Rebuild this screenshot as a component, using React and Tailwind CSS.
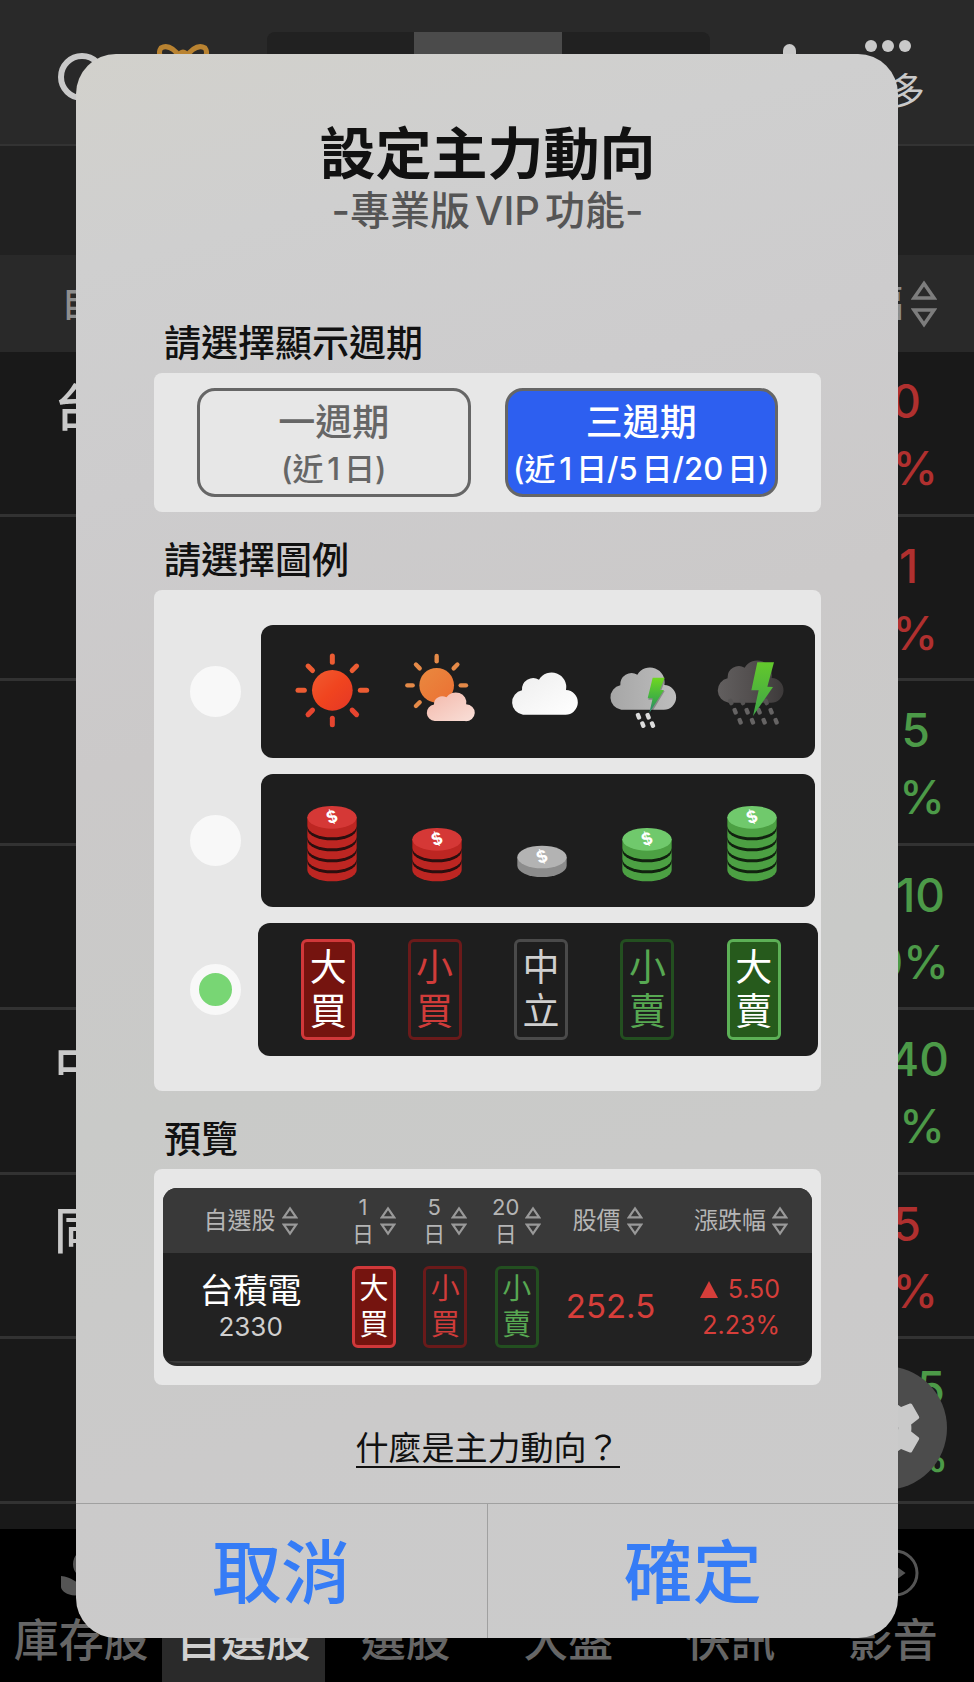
import React, { useState } from 'react';
import { MdSettings } from 'react-icons/md';
import clsx from 'clsx';

const rows = [
  { name: '台', change: '0', percent: '%', color: 'text-[#b0302f]', pad: 'pr-[53px]', padPercent: 'pr-[36px]' },
  { name: '', change: '1', percent: '%', color: 'text-[#b0302f]', pad: 'pr-[56px]', padPercent: 'pr-[36px]' },
  { name: '', change: '5', percent: '%', color: 'text-[#4c9a48]', pad: 'pr-[44px]', padPercent: 'pr-[29px]' },
  { name: '', change: '10', percent: '0%', color: 'text-[#4c9a48]', pad: 'pr-[29px]', padPercent: 'pr-[25px]' },
  { name: '中', change: '40', percent: '%', color: 'text-[#4c9a48]', pad: 'pr-[25px]', padPercent: 'pr-[29px]' },
  { name: '同', change: '5', percent: '%', color: 'text-[#b0302f]', pad: 'pr-[53px]', padPercent: 'pr-[36px]' },
  { name: '', change: '5', percent: '%', color: 'text-[#4c9a48]', pad: 'pr-[29px]', padPercent: 'pr-[25px]' },
];

const tabs = ['庫存股', '自選股', '選股', '大盤', '快訊', '影音'];

const tagStyles = {
  bigBuy: 'border-[#d0383a] bg-[#75140f] text-white',
  smallBuy: 'border-[#6a1a1a] text-[#d03c3a]',
  neutral: 'border-[#4a4a4a] text-[#cfcfcf]',
  smallSell: 'border-[#234f20] text-[#57a852]',
  bigSell: 'border-[#5cb056] bg-[#265a1c] text-white',
};

const SortIcon = ({ className }) => (
  <svg viewBox="0 0 26 48" className={className} fill="none" stroke="currentColor" strokeWidth="3.5" aria-hidden="true">
    <path d="M13 3.5 L23 18 H3 Z" />
    <path d="M13 44.5 L23 30 H3 Z" />
  </svg>
);

const Tag = ({ kind, text, small }) => (
  <span
    className={clsx(
      'inline-flex flex-col items-center justify-center border-[3px] rounded-md',
      small ? 'w-11 h-[82px] text-[29px] leading-9' : 'w-[54px] h-[101px] text-[37px] leading-[44px]',
      tagStyles[kind]
    )}
  >
    <span>{text[0]}</span>
    <span>{text[1]}</span>
  </span>
);

/* ---------- weather legend ---------- */

const CLOUD = 'M36 127 a37 37 0 0 1 -3 -73 a34 34 0 0 1 51 -32 a44 44 0 0 1 81 31 a37 37 0 0 1 -3 74 z';
const iconBox = 'w-[100px] h-[133px]';

const Rays = ({ cx, cy, from, to, angles, width, stroke }) => (
  <g stroke={stroke} strokeWidth={width} strokeLinecap="round">
    {angles.map(a => (
      <line key={a} x1={cx} y1={cy - from} x2={cx} y2={cy - to} transform={`rotate(${a} ${cx} ${cy})`} />
    ))}
  </g>
);

const Sun = () => (
  <svg viewBox="392 132 300 399" className={iconBox} aria-hidden="true">
    <defs>
      <linearGradient id="sun" gradientUnits="userSpaceOnUse" x1="450" y1="230" x2="640" y2="430">
        <stop offset="0" stopColor="#f0693a" />
        <stop offset=".5" stopColor="#f0441f" />
        <stop offset="1" stopColor="#dd2f2a" />
      </linearGradient>
    </defs>
    <circle cx="546" cy="328" r="61" fill="url(#sun)" />
    <Rays cx={546} cy={328} from={84} to={103} width={15} angles={[0, 45, 90, 270, 315]} stroke="#ec5c33" />
    <Rays cx={546} cy={328} from={84} to={103} width={15} angles={[135, 180, 225]} stroke="#e6452f" />
  </svg>
);

const SunCloud = () => (
  <svg viewBox="708 132 300 399" className={iconBox} aria-hidden="true">
    <defs>
      <linearGradient id="sunset" x1="0" y1="0" x2="1" y2="1">
        <stop offset="0" stopColor="#e9893f" />
        <stop offset="1" stopColor="#ec7033" />
      </linearGradient>
      <linearGradient id="pink" x1="0" y1="0" x2="1" y2="1">
        <stop offset="0" stopColor="#f3b8aa" />
        <stop offset="1" stopColor="#f9dfd8" />
      </linearGradient>
    </defs>
    <circle cx="860" cy="313" r="52" fill="url(#sunset)" />
    <Rays cx={860} cy={313} from={72} to={88} width={13} angles={[0, 45, 90, 225, 270, 315]} stroke="#e58a48" />
    <path d={CLOUD} transform="translate(828 334) scale(.73 .68)" fill="url(#pink)" />
  </svg>
);

const Cloud = () => (
  <svg viewBox="-25 72 300 399" className={iconBox} aria-hidden="true">
    <defs>
      <linearGradient id="white" x1="0" y1="0" x2="1" y2="1">
        <stop offset="0" stopColor="#ededed" />
        <stop offset="1" stopColor="#ffffff" />
      </linearGradient>
    </defs>
    <path d={CLOUD} transform="translate(35 214)" fill="url(#white)" />
  </svg>
);

const Drops = ({ points, fill }) => (
  <g fill={fill}>
    {points.map(([x, y]) => (
      <rect key={`${x}-${y}`} x={x - 6} y={y - 10} width="13" height="20" rx="5" transform={`rotate(-22 ${x} ${y})`} />
    ))}
  </g>
);

const RainCloud = () => (
  <svg viewBox="291 72 300 399" className={iconBox} aria-hidden="true">
    <defs>
      <linearGradient id="gray" x1="0" y1="0" x2="1" y2="0">
        <stop offset="0" stopColor="#a6a6a6" />
        <stop offset="1" stopColor="#bdbdbd" />
      </linearGradient>
      <linearGradient id="bolt" x1="0" y1="0" x2="0" y2="1">
        <stop offset="0" stopColor="#6fd81f" />
        <stop offset=".6" stopColor="#3eae45" />
        <stop offset="1" stopColor="#2c8073" />
      </linearGradient>
    </defs>
    <path d={CLOUD} transform="translate(331 199)" fill="url(#gray)" />
    <path d="M462 234 L500 234 L486 270 L497 270 L455 340 L464 296 L448 296 Z" fill="#000" opacity=".25" />
    <path d="M461 230 L497 230 L483 267 L495 267 L451 336 L461 292 L446 292 Z" fill="url(#bolt)" />
    <Drops fill="#dcdcdc" points={[[418, 346], [447, 346], [431, 371], [460, 371]]} />
  </svg>
);

const StormCloud = () => (
  <svg viewBox="606 72 300 399" className={iconBox} aria-hidden="true">
    <defs>
      <linearGradient id="dark" x1="0" y1="0" x2="1" y2="0">
        <stop offset="0" stopColor="#625f5f" />
        <stop offset=".5" stopColor="#534f4f" />
        <stop offset="1" stopColor="#3d3a3a" />
      </linearGradient>
      <linearGradient id="bolt2" x1="0" y1="0" x2="0" y2="1">
        <stop offset="0" stopColor="#63c82c" />
        <stop offset="1" stopColor="#3fa548" />
      </linearGradient>
    </defs>
    <path d={CLOUD} transform="translate(653 178)" fill="url(#dark)" />
    <Drops fill="#555353" points={[[695, 303], [730, 303], [801, 303]]} />
    <Drops fill="#666464" points={[[708, 331], [744, 331], [780, 331], [816, 331], [723, 361], [760, 361], [795, 361], [831, 361]]} />
    <path d="M775 184 L825 184 L805 257 L822 258 L762 345 L779 268 L757 268 Z" fill="url(#bolt2)" />
  </svg>
);

/* ---------- coin legend ---------- */

const Coins = ({ count, top, side, gap }) => {
  const base = count === 1 ? 275 : 288;
  const layers = Array.from({ length: count }, (_, i) => base - i * 33);
  const face = layers[count - 1] - 26;
  const body = y => `M76 ${y - 26} V${y} A74 34 0 0 0 224 ${y} V${y - 26} Z`;

  return (
    <svg viewBox="-3 0 300 399" className={iconBox} aria-hidden="true">
      {layers.map((y, i) => (
        <g key={y}>
          {i > 0 && <path d={body(y + 9)} fill={gap} />}
          <path d={body(y)} fill={side} />
        </g>
      ))}
      <ellipse cx="150" cy={face} rx="74" ry="34" fill={top} />
      <text
        x="150"
        y={face + 16}
        textAnchor="middle"
        fontSize="50"
        fontWeight="700"
        fill="#fff"
        transform={`rotate(-20 150 ${face})`}
      >
        $
      </text>
    </svg>
  );
};

const red = { top: '#d53836', side: '#bd2622', gap: '#2a0f0f' };
const green = { top: '#70c96c', side: '#4ca043', gap: '#11220f' };
const gray = { top: '#b3b3b3', side: '#8c8c8c', gap: '#222' };

const legends = [
  { id: 'weather', label: '天氣', items: [<Sun />, <SunCloud />, <Cloud />, <RainCloud />, <StormCloud />] },
  {
    id: 'coins',
    label: '金幣',
    items: [
      <Coins count={5} {...red} />,
      <Coins count={3} {...red} />,
      <Coins count={1} {...gray} />,
      <Coins count={3} {...green} />,
      <Coins count={5} {...green} />,
    ],
  },
  {
    id: 'text',
    label: '文字',
    items: [
      <Tag kind="bigBuy" text="大買" />,
      <Tag kind="smallBuy" text="小買" />,
      <Tag kind="neutral" text="中立" />,
      <Tag kind="smallSell" text="小賣" />,
      <Tag kind="bigSell" text="大賣" />,
    ],
  },
];

/* ---------- page behind the dialog ---------- */

const Watchlist = () => (
  <div className="min-h-screen flex flex-col bg-[#191919]" aria-hidden="true">
    <header className="h-[146px] shrink-0 flex items-start pl-[58px] pr-[49px] pt-8 bg-[#292929] border-b-2 border-[#333]">
      <div className="flex gap-[51px] pt-3">
        <svg viewBox="0 0 48 60" className="w-12 h-[60px]" fill="none" stroke="#c9c9c9" strokeWidth="6">
          <circle cx="24" cy="33" r="21" />
        </svg>
        <svg viewBox="0 0 52 40" className="w-[52px] h-10" fill="none" stroke="#b98331" strokeWidth="5">
          <path d="M24 14 C16 3 9 1 4 4 C1 8 3 14 8 20" />
          <path d="M28 14 C36 3 43 1 48 4 C51 8 49 14 44 20" />
          <circle cx="26" cy="11" r="3" fill="#b98331" />
        </svg>
      </div>
      <div className="flex-1 flex justify-center pr-4">
        <div className="flex w-[443px] h-16 rounded-lg overflow-hidden bg-[#212121]">
          <div className="flex-1" />
          <div className="flex-1 bg-[#4b4b4b]" />
          <div className="flex-1" />
        </div>
      </div>
      <div className="flex gap-[55px]">
        <span className="w-[13px] h-10 mt-3 rounded-full bg-[#c9c9c9]" />
        <div className="flex flex-col items-center gap-5 pt-2">
          <div className="flex gap-[5px]">
            <span className="size-3 rounded-full bg-[#c9c9c9]" />
            <span className="size-3 rounded-full bg-[#c9c9c9]" />
            <span className="size-3 rounded-full bg-[#c9c9c9]" />
          </div>
          <span className="text-[37px] leading-10 text-[#c9c9c9]">更多</span>
        </div>
      </div>
    </header>
    <div className="h-[109px] shrink-0 bg-[#212121]" />
    <div className="h-[97px] shrink-0 flex items-center justify-between pl-[61px] pr-[37px] bg-[#292929] text-[37px] font-medium text-[#8e8e8e]">
      <span>自選股</span>
      <span className="flex items-center gap-2">
        漲跌幅
        <SortIcon className="w-[26px] h-12 text-[#7d7d7d]" />
      </span>
    </div>
    <div className="flex-1 flex flex-col font-medium">
      {rows.map((row, i) => (
        <div key={i} className="flex-1 flex justify-between border-b-[3px] border-[#323232]">
          <span className="pl-[54px] pt-[26px] text-[50px] leading-[60px] text-[#c9c9c9]">{row.name}</span>
          <span className={clsx('flex flex-col pt-4 text-[46px] leading-[67px] text-right', row.color)}>
            <span className={row.pad}>{row.change}</span>
            <span className={row.padPercent}>{row.percent}</span>
          </span>
        </div>
      ))}
    </div>
    <div className="h-[25px] shrink-0" />
    <nav className="h-[153px] shrink-0 flex bg-black text-[45px] leading-[56px] font-medium text-[#666]">
      {tabs.map((tab, i) => (
        <div key={tab} className={clsx('flex-1 flex flex-col items-center pt-[22px]', i === 1 && 'bg-[#2a2a2a] text-[#d0d0d0]')}>
          <span className="h-[62px]">
            {i === 0 && (
              <svg viewBox="0 0 48 48" className="size-12" fill="#555">
                <circle cx="31" cy="13" r="15" />
                <path d="M4 25 C14 25 20 34 30 34 L44 30 V44 H22 C12 46 4 40 4 36 Z" />
              </svg>
            )}
            {i === 5 && (
              <svg viewBox="0 0 48 48" className="size-12 overflow-visible" fill="none" stroke="#555" strokeWidth="3">
                <circle cx="26" cy="22" r="22" />
                <path d="M20 12 L34 22 L20 32 Z" fill="#555" />
              </svg>
            )}
          </span>
          <span>{tab}</span>
        </div>
      ))}
    </nav>
    <div className="absolute right-[27px] bottom-[192px] size-[124px] rounded-full bg-[#4c4c4c] flex items-center justify-center">
      <MdSettings className="size-[88px] text-[#c9c9c9]" />
    </div>
  </div>
);

const SectionTitle = ({ children, className }) => (
  <h2 className={clsx('mb-2 pl-[10px] text-[37px] leading-[42px] font-medium text-[#111]', className)}>{children}</h2>
);

const PeriodButton = ({ active, title, note, onClick }) => (
  <button
    type="button"
    aria-pressed={active}
    onClick={onClick}
    className={clsx(
      'flex-1 h-[109px] pt-[5px] rounded-[18px] border-[3px] border-[#666] font-medium whitespace-nowrap flex flex-col items-center justify-center',
      active ? 'bg-[#2d5ff0] text-white' : 'text-[#666]'
    )}
  >
    <span className="text-[37px] leading-[48px]">{title}</span>
    <span className="text-[31px] leading-[44px]">{note}</span>
  </button>
);

const HeadCell = ({ children, className }) => (
  <th scope="col" className="p-0 font-normal">
    <span className={clsx('flex items-center justify-center gap-[6px]', className)}>
      <span>{children}</span>
      <SortIcon className="w-4 h-[30px] text-[#999]" />
    </span>
  </th>
);

const DayHead = ({ days }) => (
  <HeadCell>
    <span className="block text-[22px] leading-[27px]">{days}</span>
    <span className="block text-[22px] leading-[27px]">日</span>
  </HeadCell>
);

const Preview = () => (
  <div className="rounded-[14px] overflow-hidden bg-[#222] border-b-[3px] border-[#2a2a2a]">
    <table className="w-full table-fixed text-center">
      <colgroup>
        <col className="w-[27%]" />
        <col className="w-[11%]" />
        <col className="w-[11%]" />
        <col className="w-[11%]" />
        <col className="w-[17%]" />
        <col className="w-[23%]" />
      </colgroup>
      <thead>
        <tr className="h-[65px] bg-[#393939] text-2xl leading-6 text-[#b5b5b5]">
          <HeadCell>自選股</HeadCell>
          <DayHead days="1" />
          <DayHead days="5" />
          <DayHead days="20" />
          <HeadCell>股價</HeadCell>
          <HeadCell className="!justify-end pr-6">漲跌幅</HeadCell>
        </tr>
      </thead>
      <tbody>
        <tr className="h-[109px] border-b-2 border-[#3a3a3a]">
          <td className="p-0">
            <div className="text-[34px] leading-10 text-white">台積電</div>
            <div className="text-[26px] leading-8 text-[#cfcfcf]">2330</div>
          </td>
          <td className="p-0"><div className="flex justify-center"><Tag small kind="bigBuy" text="大買" /></div></td>
          <td className="p-0"><div className="flex justify-center"><Tag small kind="smallBuy" text="小買" /></div></td>
          <td className="p-0"><div className="flex justify-center"><Tag small kind="smallSell" text="小賣" /></div></td>
          <td className="p-0 pl-[6px] text-[33px] text-[#d63e3a]">252.5</td>
          <td className="p-0 pr-8 text-[25px] leading-9 text-[#d63e3a] text-right">
            <div className="flex items-center justify-end gap-[10px]">
              <svg viewBox="0 0 18 17" className="w-[18px] h-[17px]" fill="currentColor" aria-hidden="true">
                <path d="M9 0 L18 17 H0 Z" />
              </svg>
              5.50
            </div>
            <div>2.23%</div>
          </td>
        </tr>
      </tbody>
    </table>
  </div>
);

const App = () => {
  const [period, setPeriod] = useState('three');
  const [legend, setLegend] = useState('text');

  return (
    <div lang="zh-Hant" className="relative min-h-screen overflow-hidden font-['Inter','Noto_Sans_CJK_TC',sans-serif] [text-autospace:normal]">
      <Watchlist />

      <div className="absolute inset-0 px-[76px] pt-[54px] pb-11">
        <div
          role="dialog"
          aria-labelledby="dialog-title"
          className="h-full flex flex-col rounded-[40px] overflow-hidden bg-[linear-gradient(165deg,#d2d1cc_0%,#cfcfcf_12%,#cdcccd_25%,#cbc9c9_40%,#c9cac8_60%,#cbcaca_80%,#cbcbcb_100%)]"
        >
          <div className="pl-[78px] pr-[77px] pt-[70px] flex-1">
            <h1 id="dialog-title" className="text-[56px] leading-[60px] font-bold text-center text-[#111]">設定主力動向</h1>
            <p className="mt-[5px] text-[40px] leading-[44px] font-medium text-center text-[#555]">-專業版VIP功能-</p>

            <SectionTitle className="mt-[90px]">請選擇顯示週期</SectionTitle>
            <div className="flex gap-[34px] px-[43px] py-[15px] rounded-lg bg-[#e7e7e7]">
              <PeriodButton active={period === 'one'} title="一週期" note="(近1日)" onClick={() => setPeriod('one')} />
              <PeriodButton active={period === 'three'} title="三週期" note="(近1日/5日/20日)" onClick={() => setPeriod('three')} />
            </div>

            <SectionTitle className="mt-7">請選擇圖例</SectionTitle>
            <div className="flex flex-col gap-4 pl-9 pr-[6px] py-[35px] rounded-lg bg-[#e7e7e7]">
              {legends.map(({ id, label, items }) => (
                <label key={id} className="flex items-center gap-5">
                  <input
                    type="radio"
                    name="legend"
                    aria-label={label}
                    checked={legend === id}
                    onChange={() => setLegend(id)}
                    className="appearance-none shrink-0 size-[51px] rounded-full border-[9px] border-[#f8f8f8] bg-[#f8f8f8] checked:bg-[#78d674]"
                  />
                  <span
                    className={clsx(
                      'flex-1 h-[133px] pl-[17px] pr-[11px] rounded-xl bg-[#1e1e1e] grid grid-cols-5 items-center justify-items-center',
                      legend === id && '-mx-[3px]'
                    )}
                  >
                    {items.map((item, i) => (
                      <React.Fragment key={i}>{item}</React.Fragment>
                    ))}
                  </span>
                </label>
              ))}
            </div>

            <SectionTitle className="mt-7">預覽</SectionTitle>
            <div className="px-[9px] py-[19px] rounded-lg bg-[#e7e7e7]">
              <Preview />
            </div>

            <div className="mt-[45px] text-center">
              <a href="#about" className="inline-block border-b-2 border-[#111] text-[33px] leading-9 text-[#111]">什麼是主力動向？</a>
            </div>
          </div>

          <div className="h-[135px] flex border-t border-[#a0a0a0] text-[69px] leading-none font-medium text-[#357cf6]">
            <button type="button" className="flex-1 pt-1 border-r border-[#a0a0a0]">取消</button>
            <button type="button" className="flex-1 pt-1">確定</button>
          </div>
        </div>
      </div>
    </div>
  );
};

export default App;
